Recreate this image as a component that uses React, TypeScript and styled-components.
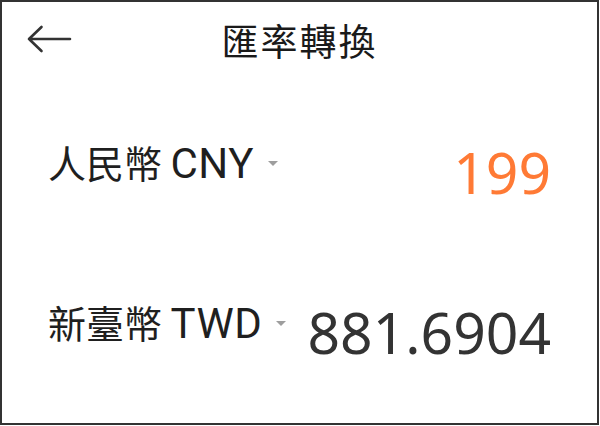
import React from "react";
import styled, { createGlobalStyle } from "styled-components";

const GlobalStyle = createGlobalStyle`
  html, body {
    margin: 0;
    padding: 0;
    background: #ffffff;
  }
  body {
    font-family: Roboto, "Noto Sans CJK TC", sans-serif;
  }
`;

type Currency = {
  name: string;
  code: string;
  amount: string;
  active?: boolean;
};

const currencies: Currency[] = [
  { name: "人民幣", code: "CNY", amount: "199", active: true },
  { name: "新臺幣", code: "TWD", amount: "881.6904" },
];

const App: React.FC = () => {
  return (
    <>
      <GlobalStyle />
      <Frame>
        <Header>
          <BackButton aria-label="返回">
            <svg width="46" height="28" viewBox="0 0 46 28" fill="none">
              <path
                d="M44 14H3M15.5 2L3 14l12.5 12"
                stroke="#333"
                strokeWidth="2.6"
                strokeLinecap="round"
                strokeLinejoin="round"
              />
            </svg>
          </BackButton>
          <Title>匯率轉換</Title>
          <span />
        </Header>

        <List>
          {currencies.map((c) => (
            <Row key={c.code}>
              <Picker>
                <Label>
                  {c.name} <Code>{c.code}</Code>
                </Label>
                <Caret />
              </Picker>
              <Amount $active={c.active}>{c.amount}</Amount>
            </Row>
          ))}
        </List>
      </Frame>
    </>
  );
};

export default App;

const Frame = styled.div`
  width: 599px;
  height: 425px;
  box-sizing: border-box;
  border: 2px solid #333;
  background: #fff;
  display: flex;
  flex-direction: column;
`;

const Header = styled.div`
  height: 78px;
  display: grid;
  grid-template-columns: 1fr auto 1fr;
  align-items: center;
`;

const BackButton = styled.button`
  justify-self: start;
  background: none;
  border: none;
  padding: 0 0 0 24px;
  margin-top: -4px;
  display: flex;
  cursor: pointer;
`;

const Title = styled.h1`
  margin: 0;
  font-family: "Noto Sans CJK TC", sans-serif;
  font-weight: 400;
  font-size: 37px;
  line-height: 1;
  color: #1a1a1a;
  letter-spacing: 2px;
  margin-top: -1px;
`;

const List = styled.div`
  display: flex;
  flex-direction: column;
  padding: 4px 46px 0 46px;
`;

const Row = styled.div`
  height: 160px;
  display: flex;
  align-items: center;
  justify-content: space-between;
`;

const Picker = styled.div`
  display: flex;
  align-items: center;
  gap: 14px;
`;

const Label = styled.span`
  font-family: "Noto Sans CJK TC", sans-serif;
  font-size: 38px;
  line-height: 1;
  color: #1f1f1f;
`;

const Code = styled.span`
  font-family: Roboto, sans-serif;
  font-size: 42px;
  letter-spacing: 0.5px;
`;

const Caret = styled.span`
  width: 0;
  height: 0;
  border-left: 5.5px solid transparent;
  border-right: 5.5px solid transparent;
  border-top: 5.5px solid #9e9e9e;
  margin-top: -2px;
`;

const Amount = styled.span<{ $active?: boolean }>`
  font-family: "Noto Sans", sans-serif;
  font-size: 57px;
  line-height: 1;
  margin-top: 16px;
  color: ${(p) => (p.$active ? "#ff7a35" : "#333333")};
`;
